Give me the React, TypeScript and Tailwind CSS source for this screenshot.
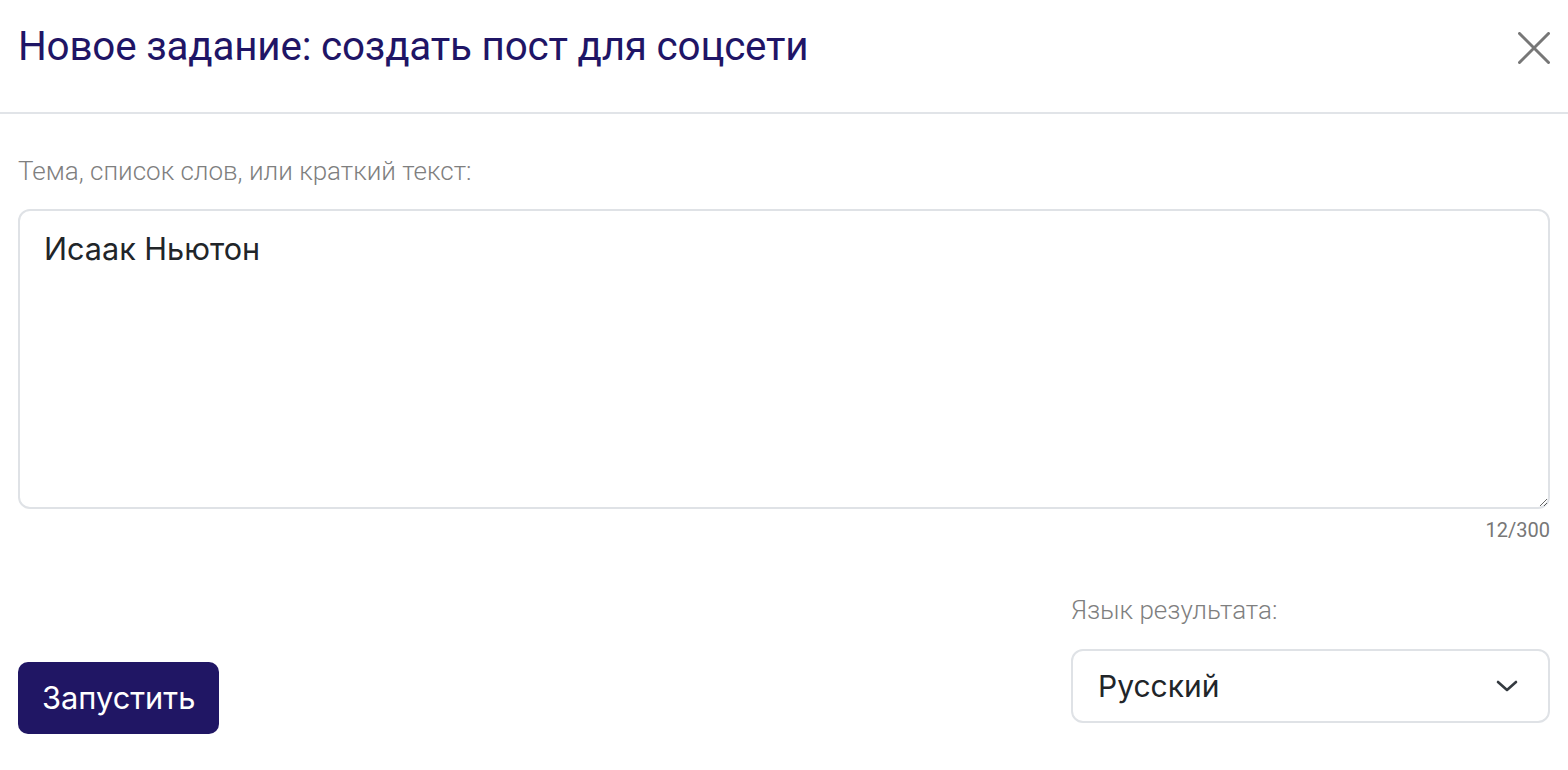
import React from "react";

export default function App() {
  return (
    <div className="w-[1568px] h-[770px] bg-white font-['Roboto',sans-serif] overflow-hidden">
      <div className="flex items-center justify-between h-[114px] pl-[18px] pr-[18px] pb-[17px] border-b-2 border-[#e1e4e8]">
        <h1 className="text-[40.4px] leading-none text-[#1f1566] font-normal tracking-[-0.2px]">
          Новое задание: создать пост для соцсети
        </h1>
        <button className="w-[32px] h-[32px] flex items-center justify-center">
          <svg width="32" height="32" viewBox="0 0 32 32" fill="none" stroke="#777" strokeWidth="3" strokeLinecap="round">
            <path d="M1.5 1.5 L30.5 30.5 M30.5 1.5 L1.5 30.5" />
          </svg>
        </button>
      </div>
      <div className="px-[18px] pt-[44px]">
        <div className="text-[26px] leading-none font-light text-[#7f7f7f]">Тема, список слов, или краткий текст:</div>
        <div className="mt-[25px]">
          <textarea
            defaultValue="Исаак Ньютон"
            className="block w-full h-[300px] rounded-[12px] border-2 border-[#dfe2e6] px-[24px] py-[18px] text-[30.6px] leading-[1.3] text-[#212529] font-['Inter',sans-serif] resize-y outline-none"
          />
        </div>
        <div className="text-right text-[20px] leading-none mt-[11px] text-[#777]">12/300</div>
        <div className="flex items-start justify-between mt-[57px]">
          <button className="mt-[65px] h-[72px] px-[24px] rounded-[10px] bg-[#201664] text-white text-[30.8px] font-['Inter',sans-serif] leading-none">
            Запустить
          </button>
          <div className="w-[479px] flex flex-col">
            <div className="text-[26px] leading-none font-light text-[#7f7f7f]">Язык результата:</div>
            <div className="mt-[26px] h-[74px] rounded-[12px] border-2 border-[#dfe2e6] flex items-center justify-between pl-[25px] pr-[30px]">
              <span className="text-[30px] text-[#212529] leading-none font-['Inter',sans-serif]">Русский</span>
              <svg width="22" height="14" viewBox="0 0 22 14" fill="none" stroke="#343a40" strokeWidth="2.6" strokeLinecap="round" strokeLinejoin="round">
                <path d="M2 3 L11 11 L20 3" />
              </svg>
            </div>
          </div>
        </div>
      </div>
    </div>
  );
}
